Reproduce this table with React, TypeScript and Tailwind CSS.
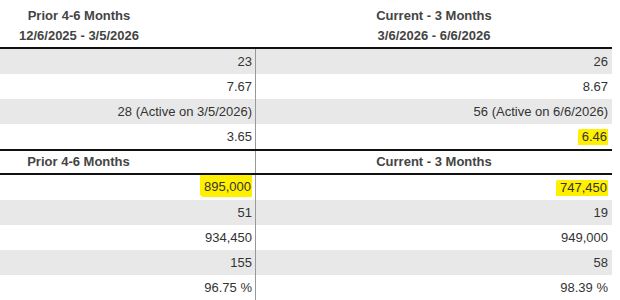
import React from 'react';

type Cell = { value: string; mark?: 'tall' | 'short' };

const topRows: [Cell, Cell][] = [
    [{ value: '23' }, { value: '26' }],
    [{ value: '7.67' }, { value: '8.67' }],
    [{ value: '28 (Active on 3/5/2026)' }, { value: '56 (Active on 6/6/2026)' }],
    [{ value: '3.65' }, { value: '6.46', mark: 'short' }],
];

const bottomRows: [Cell, Cell][] = [
    [{ value: '895,000', mark: 'tall' }, { value: '747,450', mark: 'short' }],
    [{ value: '51' }, { value: '19' }],
    [{ value: '934,450' }, { value: '949,000' }],
    [{ value: '155' }, { value: '58' }],
    [{ value: '96.75 %' }, { value: '98.39 %' }],
];

function Value({ cell }: { cell: Cell }) {
    if (!cell.mark) return <span>{cell.value}</span>;
    return (
        <span
            className={`inline-block bg-[#fff000] pl-[4px] pr-[1px] ${cell.mark === 'tall' ? 'h-[22px] leading-[24px] -mt-[3px] rounded-bl-[4px]' : 'h-[16px] leading-[16px] rounded-tl-[2px]'}`}
        >
            {cell.value}
        </span>
    );
}

function DataRows({ rows, grayFirst }: { rows: [Cell, Cell][]; grayFirst: boolean }) {
    return (
        <>
            {rows.map((row, i) => {
                const gray = grayFirst ? i % 2 === 0 : i % 2 === 1;
                return (
                    <div
                        key={i}
                        className={`grid grid-cols-[256px_356px] h-[25px] items-center ${gray ? 'bg-[#e8e8e8]' : 'bg-white'}`}
                    >
                        <div className="h-full flex items-center justify-end pr-[3px] border-r border-[#999]">
                            <Value cell={row[0]} />
                        </div>
                        <div className="h-full flex items-center justify-end pr-[4px]">
                            <Value cell={row[1]} />
                        </div>
                    </div>
                );
            })}
        </>
    );
}

export default function App() {
    return (
        <div className="w-[620px] h-[300px] overflow-hidden bg-white text-[13px] text-[#333] font-['Liberation_Sans',Arial,sans-serif]">
            <div className="w-[612px]">
                {/* Period headers */}
                <div className="grid grid-cols-[256px_356px] h-[49px] border-b-2 border-[#111] font-bold text-[#444] leading-[20px]">
                    <div className="text-center pr-[98px] pt-[6px]">
                        <div>Prior 4-6 Months</div>
                        <div>12/6/2025 - 3/5/2026</div>
                    </div>
                    <div className="text-center pt-[6px]">
                        <div>Current - 3 Months</div>
                        <div>3/6/2026 - 6/6/2026</div>
                    </div>
                </div>

                <DataRows rows={topRows} grayFirst />

                {/* Second section */}
                <div className="grid grid-cols-[256px_356px] h-[26px] border-y-2 border-[#111] font-bold text-[#444]">
                    <div className="flex items-center justify-center pr-[98px] border-r border-[#999]">Prior 4-6 Months</div>
                    <div className="flex items-center justify-center">Current - 3 Months</div>
                </div>

                <DataRows rows={bottomRows} grayFirst={false} />
            </div>
        </div>
    );
}
